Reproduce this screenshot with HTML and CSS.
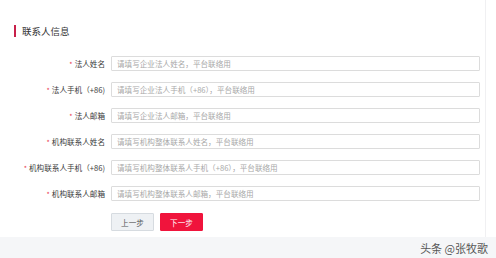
FILE: index.html
```html
<!DOCTYPE html>
<html lang="zh">
<head>
  <meta charset="UTF-8" />
  <title>联系人信息</title>
  <link rel="stylesheet" href="styles.css">
</head>
<body>
  <div class="page">
    <div class="section-title">联系人信息</div>
    <form class="form">
      <label class="label"><span class="req">*</span>法人姓名</label>
      <input class="field" placeholder="请填写企业法人姓名，平台联络用" />
      <label class="label"><span class="req">*</span>法人手机（+86)</label>
      <input class="field" placeholder="请填写企业法人手机（+86），平台联络用" />
      <label class="label"><span class="req">*</span>法人邮箱</label>
      <input class="field" placeholder="请填写企业法人邮箱，平台联络用" />
      <label class="label"><span class="req">*</span>机构联系人姓名</label>
      <input class="field" placeholder="请填写机构整体联系人姓名，平台联络用" />
      <label class="label"><span class="req">*</span>机构联系人手机（+86)</label>
      <input class="field" placeholder="请填写机构整体联系人手机（+86），平台联络用" />
      <label class="label"><span class="req">*</span>机构联系人邮箱</label>
      <input class="field" placeholder="请填写机构整体联系人邮箱，平台联络用" />
      <div class="actions">
        <button type="button" class="btn btn-prev">上一步</button>
        <button type="button" class="btn btn-next">下一步</button>
      </div>
    </form>
  </div>
  <div class="footer">
    <span class="mark">头条 @张牧歌</span>
  </div>
</body>
</html>
```

FILE: styles.css
```css
html, body {
  margin: 0; padding: 0; height: 100%;
  font-family: "Noto Sans CJK SC", "Noto Sans", sans-serif;
  background: #fff; overflow: hidden;
}
.page {
  height: 237px; box-sizing: border-box; padding: 25px 16px 0 14px;
  border-right: 1px solid #f0f0f2; width: 486px;
}
.section-title {
  border-left: 2px solid #c8204a; padding-left: 6px;
  font-size: 9.5px; line-height: 12px; color: #333;
}
.form {
  display: grid; grid-template-columns: 91px 369px;
  column-gap: 6px; row-gap: 10px; margin-top: 19px;
}
.label {
  font-size: 7.6px; color: #3a3a3a; text-align: right;
  line-height: 15px; white-space: nowrap;
}
.req { color: #e8374c; margin-right: 2px; font-size: 7px; }
.field {
  height: 15px; box-sizing: border-box; margin: 0;
  border: 1px solid #dcdcdc; border-radius: 1px;
  padding: 0 5px; font-family: inherit; font-size: 7.6px; outline: none;
}
.field::placeholder { color: #a8a8a8; }
.actions {
  grid-column: 2; display: flex; gap: 6px; margin-top: 1px;
}
.btn {
  width: 43px; height: 18px; padding: 0; border-radius: 1px;
  font-family: inherit; font-size: 7.6px; cursor: pointer;
}
.btn-prev { background: #eef1f4; border: 1px solid #d6dbe0; color: #555; }
.btn-next { background: #f0143c; border: 1px solid #f0143c; color: #fff; }
.footer {
  height: 21px; background: #f5f6f8;
  display: flex; justify-content: flex-end; align-items: center;
  padding-right: 8px;
}
.mark {
  font-size: 11px; color: #555;
  text-shadow: 0 0 1px #fff;
}
```
